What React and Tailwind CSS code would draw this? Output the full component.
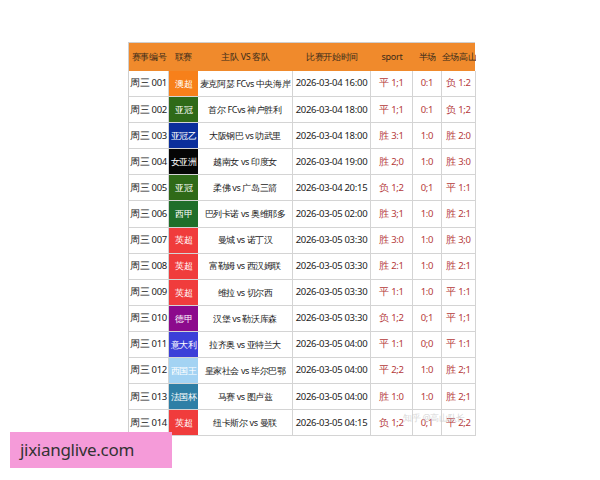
import React from "react";

const rows = [
  ["周三 001", "澳超", "bg-[#f7801a]", "麦克阿瑟 FCvs 中央海岸", "2026-03-04 16:00", "平 1;1", "0:1", "负 1:2"],
  ["周三 002", "亚冠", "bg-[#2f6a18]", "首尔 FCvs 神户胜利", "2026-03-04 18:00", "平 1;1", "0:1", "负 1;2"],
  ["周三 003", "亚冠乙", "bg-[#0b2f9c]", "大阪钢巴 vs 叻武里", "2026-03-04 18:00", "胜 3:1", "1:0", "胜 2:0"],
  ["周三 004", "女亚洲", "bg-[#050505]", "越南女 vs 印度女", "2026-03-04 19:00", "胜 2;0", "1:0", "胜 3:0"],
  ["周三 005", "亚冠", "bg-[#2f6a18]", "柔佛 vs 广岛三箭", "2026-03-04 20:15", "负 1;2", "0;1", "平 1:1"],
  ["周三 006", "西甲", "bg-[#1f6e2a]", "巴列卡诺 vs 奥维耶多", "2026-03-05 02:00", "胜 3;1", "1:0", "胜 2:1"],
  ["周三 007", "英超", "bg-[#f03c3c]", "曼城 vs 诺丁汉", "2026-03-05 03:30", "胜 3:0", "1:0", "胜 3;0"],
  ["周三 008", "英超", "bg-[#f03c3c]", "富勒姆 vs 西汉姆联", "2026-03-05 03:30", "胜 2:1", "1:0", "胜 2:1"],
  ["周三 009", "英超", "bg-[#f03c3c]", "维拉 vs 切尔西", "2026-03-05 03:30", "平 1:1", "1:0", "平 1:1"],
  ["周三 010", "德甲", "bg-[#8c0a8c]", "汉堡 vs 勒沃库森", "2026-03-05 03:30", "负 1;2", "0;1", "平 1;1"],
  ["周三 011", "意大利", "bg-[#3c3fd8]", "拉齐奥 vs 亚特兰大", "2026-03-05 04:00", "平 1:1", "0;0", "平 1:1"],
  ["周三 012", "西国王", "bg-[#a3d3f3]", "皇家社会 vs 毕尔巴鄂", "2026-03-05 04:00", "平 2;2", "1:0", "胜 2;1"],
  ["周三 013", "法国杯", "bg-[#2e7fa6]", "马赛 vs 图卢兹", "2026-03-05 04:00", "胜 1:0", "1:0", "胜 2;1"],
  ["周三 014", "英超", "bg-[#f03c3c]", "纽卡斯尔 vs 曼联", "2026-03-05 04:15", "负 1;2", "0;1", "平 2;2"],
];

const cols = "grid-cols-[40px_29px_95px_78px_42px_29px_34px]";
const cell = "flex items-center justify-center whitespace-nowrap overflow-hidden border-r border-b border-[#d4d4d4]";

export default function App() {
  return (
    <div className="relative w-[600px] h-[480px] bg-white font-['Liberation_Sans','Noto_Sans_CJK_SC',sans-serif] text-[9.5px] tracking-[-0.3px] text-[#222]">
      <div className="absolute left-[128px] top-[42px] w-[347px] border-l border-t border-[#cfcfcf]">
        <div className={`grid ${cols} h-[28px] bg-[#f08a2c] text-[#3a2a1a] text-[9px]`}>
          {["赛事编号", "联赛", "主队 VS 客队", "比赛开始时间", "sport", "半场", "全场高山"].map((h) => (
            <div key={h} className="flex items-center justify-center whitespace-nowrap overflow-hidden">{h}</div>
          ))}
        </div>
        {rows.map((r) => (
          <div key={r[0]} className={`grid ${cols} h-[26.1px] bg-white`}>
            <div className={cell}>{r[0]}</div>
            <div className={`flex items-center justify-center whitespace-nowrap overflow-hidden border-b border-[#d4d4d4] text-white text-[9px] tracking-[-0.5px] ${r[2]}`}>{r[1]}</div>
            <div className={`${cell} text-[9px] tracking-[-0.4px]`}>{r[3]}</div>
            <div className={cell}>{r[4]}</div>
            <div className={`${cell} text-[#b53a3a]`}>{r[5]}</div>
            <div className={`${cell} text-[#b53a3a]`}>{r[6]}</div>
            <div className={`${cell} text-[#b53a3a]`}>{r[7]}</div>
          </div>
        ))}
        <div className="absolute right-[10px] bottom-[12px] text-[9px] text-[#c8c8c8] opacity-70">知乎 @高山队长</div>
      </div>
      <div className="absolute left-[10px] top-[432px] w-[162px] h-[36px] bg-[#f59bd9] flex items-center pl-[10px] text-[17px] text-[#333] font-['Open_Sans',sans-serif]">
        jixianglive.com
      </div>
    </div>
  );
}
